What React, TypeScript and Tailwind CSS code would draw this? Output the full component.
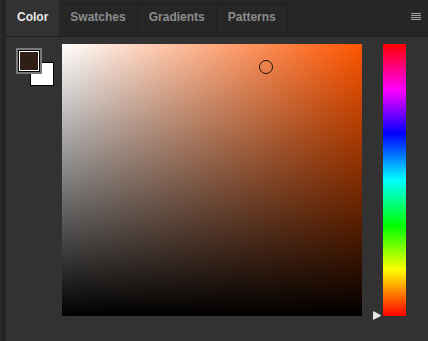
const tabs = ['Color', 'Swatches', 'Gradients', 'Patterns']

const HueArrow = () => (
  <svg width="9" height="9" viewBox="0 0 9 9" className="absolute left-[-11px] bottom-[-4px]">
    <path d="M1.5 1 Q1 0.5 2 1 L8 4 Q8.8 4.5 8 5 L2 8 Q1 8.5 1.5 8 Z" fill="#e6e6e6" stroke="#e6e6e6" strokeWidth="1" strokeLinejoin="round" />
  </svg>
)

export default function App() {
  return (
    <div className="flex h-[341px] w-[428px] bg-[#323232] font-['Liberation_Sans',sans-serif]">
      <div className="flex w-[6px] shrink-0">
        <div className="w-[3px] bg-[#2a2a2a]" />
        <div className="w-[1px] bg-[#1c1c1c]" />
        <div className="w-[2px] bg-[#282828]" />
      </div>

      <div className="flex min-w-0 flex-1 flex-col">
        <div className="flex h-[37px] items-stretch border-b border-[#1e1e1e] bg-[#262626]">
          {tabs.map((t, i) => (
            <div
              key={t}
              className={
                i === 0
                  ? 'flex items-center bg-[#323232] px-[11px] pb-[3px] text-[12px] font-bold text-[#e8e8e8]'
                  : 'mt-[3px] flex items-center border-r border-t border-[#1e1e1e] px-[11px] pb-[6px] text-[12px] font-bold text-[#8c8c8c]'
              }
            >
              {t}
            </div>
          ))}
          <div className="ml-auto flex items-center pr-[7px] pb-[3px]">
            <div className="flex flex-col gap-[1px]">
              <div className="h-[1px] w-[10px] bg-[#a3a3a3]" />
              <div className="h-[1px] w-[10px] bg-[#a3a3a3]" />
              <div className="h-[1px] w-[10px] bg-[#a3a3a3]" />
              <div className="h-[1px] w-[10px] bg-[#a3a3a3]" />
            </div>
          </div>
        </div>

        <div className="flex flex-1 pt-[7px]">
          <div className="relative ml-[10px] mt-[4px] h-[40px] w-[40px] shrink-0">
            <div className="absolute left-[14px] top-[14px] h-[24px] w-[24px] border border-black bg-white" />
            <div className="absolute left-0 top-0 h-[26px] w-[26px] border-2 border-[#7a7a7a] bg-black p-[1px]">
              <div className="h-full w-full border border-white bg-[#2e1e16]" />
            </div>
          </div>

          <div className="relative ml-[6px] h-[272px] w-[300px] shrink-0 bg-[linear-gradient(to_right,#ffffff,#ff5500)]">
            <div className="absolute inset-0 bg-[linear-gradient(to_bottom,rgba(0,0,0,0),#000000)]" />
            <div className="absolute left-[197px] top-[16px] h-[14px] w-[14px] rounded-full border border-[#1a1008]" />
          </div>

          <div className="relative ml-[21px] h-[272px] w-[23px] shrink-0 bg-[linear-gradient(to_bottom,#ff0000,#ff00ff_17%,#0000ff_33%,#00ffff_50%,#00ff00_67%,#ffff00_83%,#ff0000)]">
            <HueArrow />
          </div>
        </div>
      </div>
    </div>
  )
}
